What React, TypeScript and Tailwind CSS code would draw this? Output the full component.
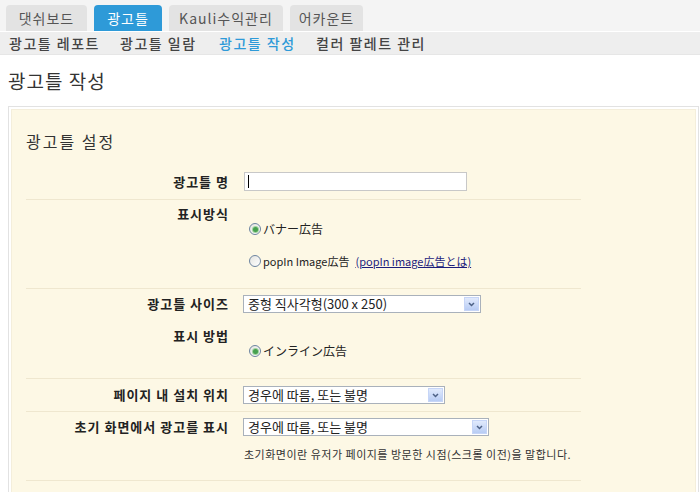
import React from 'react';

const tabs = [
  { label: '댓쉬보드', w: 'w-[81px]', active: false },
  { label: '광고틀', w: 'w-[68px]', active: true },
  { label: 'Kauli수익관리', w: 'w-[114px]', active: false },
  { label: '어카운트', w: 'w-[73px]', active: false },
];

const subNav = [
  { label: '광고틀 레포트', w: 'w-[111px]', active: false },
  { label: '광고틀 일람', w: 'w-[99px]', active: false },
  { label: '광고틀 작성', w: 'w-[97px]', active: true },
  { label: '컬러 팔레트 관리', w: 'w-[140px]', active: false },
];

const Radio: React.FC<{ checked?: boolean }> = ({ checked }) => (
  <span className="w-[12px] h-[12px] rounded-full border border-[#6d84a0] bg-linear-to-br from-[#e4e4e0] to-white flex items-center justify-center shrink-0">
    {checked && <span className="w-[5px] h-[5px] rounded-full bg-[#46a04e] ring-1 ring-[#9fd29f]" />}
  </span>
);

const Select: React.FC<{ w: string; text: string }> = ({ w, text }) => (
  <div className={`h-[18px] border border-[#a9b1bb] bg-white flex items-stretch ${w}`}>
    <span className="flex-1 pl-[4px] text-[13px] leading-[16px] text-[#222] whitespace-nowrap">{text}</span>
    <span className="w-[15px] my-[1px] mr-[1px] border border-[#c6d5f7] bg-linear-to-b from-[#e1eafc] to-[#b8ccf4] flex items-center justify-center">
      <svg width="7" height="5" viewBox="0 0 7 5">
        <path d="M1 1 L3.5 3.5 L6 1" fill="none" stroke="#4d6185" strokeWidth="1.5" />
      </svg>
    </span>
  </div>
);

const Label: React.FC<{ children: React.ReactNode; pt: string }> = ({ children, pt }) => (
  <div className={`w-[217px] pr-[14px] text-right text-[13px] font-bold tracking-[1px] text-[#222] whitespace-nowrap ${pt}`}>
    {children}
  </div>
);

export default function App() {
  return (
    <div className="w-[700px] h-[492px] overflow-hidden bg-white font-['Noto_Sans_CJK_KR',sans-serif]">
      {/* main tabs */}
      <div className="h-[31px] bg-[#f4f4f4] flex items-end pl-[6px] gap-[7px]">
        {tabs.map(t => (
          <div
            key={t.label}
            className={`${t.w} h-[26px] rounded-t-[4px] flex items-center justify-center text-[14px] tracking-[1px] ${
              t.active ? 'bg-[#2e9ad8] text-white' : 'bg-[#e3e3e3] text-[#555]'
            }`}
          >
            {t.label}
          </div>
        ))}
      </div>
      <div className="h-[1px] bg-white" />
      {/* sub nav */}
      <div className="h-[23px] bg-[#eeeeee] border-b border-[#e6e6e6] flex items-center pl-[9px]">
        {subNav.map(s => (
          <div
            key={s.label}
            className={`${s.w} text-[14px] font-medium tracking-[1.5px] whitespace-nowrap ${s.active ? 'text-[#2e9ad8]' : 'text-[#444]'}`}
          >
            {s.label}
          </div>
        ))}
      </div>

      <div className="h-[51px] flex items-center pl-[8px] pt-[2px] text-[19px] tracking-[1px] text-[#333]">광고틀 작성</div>

      {/* settings box */}
      <div className="ml-[8px] mr-[1px] border border-[#e2e2e2] bg-white p-[2px] h-[400px]">
        <div className="h-full bg-[#fdf8e5] border border-[#f4eedb] pl-[14px] pt-[21px]">
          <div className="h-[20px] leading-[20px] text-[16px] tracking-[2px] text-[#333]">광고틀 설정</div>

          <div className="w-[555px] mt-[16px]">
            {/* 광고틀 명 */}
            <div className="flex border-b border-[#efe7cf] pt-[5px] pb-[8px]">
              <Label pt="leading-[19px]">광고틀 명</Label>
              <div className="w-[223px] h-[19px] ml-[1px] border border-[#c8c8c8] bg-white flex items-center pl-[3px]">
                <span className="w-[1px] h-[13px] bg-black" />
              </div>
            </div>

            {/* 표시방식 */}
            <div className="flex border-b border-[#efe7cf]">
              <Label pt="pt-[6px] leading-[15px]">표시방식</Label>
              <div className="flex flex-col gap-[16px] pt-[21px] pb-[19px] pl-[6px] text-[#222]">
                <div className="h-[16px] flex items-center gap-[2px] text-[12px]">
                  <Radio checked />
                  <span>バナー広告</span>
                </div>
                <div className="h-[16px] flex items-center gap-[2px] whitespace-nowrap text-[11px]">
                  <Radio />
                  <span>popIn Image広告</span>
                  <span className="ml-[4px] text-[#1c1c7c] underline">(popIn image広告とは)</span>
                </div>
              </div>
            </div>

            {/* 광고틀 사이즈 */}
            <div className="flex pt-[6px] pb-[8px]">
              <Label pt="leading-[18px]">광고틀 사이즈</Label>
              <Select w="w-[238px]" text="중형 직사각형(300 x 250)" />
            </div>

            {/* 표시 방법 */}
            <div className="flex border-b border-[#efe7cf]">
              <Label pt="pt-[7px] leading-[15px]">표시 방법</Label>
              <div className="pt-[22px] pb-[19px] pl-[6px] text-[12px] text-[#222]">
                <div className="h-[16px] flex items-center gap-[2px]">
                  <Radio checked />
                  <span>インライン広告</span>
                </div>
              </div>
            </div>

            {/* 페이지 내 설치 위치 */}
            <div className="flex border-b border-[#efe7cf] pt-[7px] pb-[7px]">
              <Label pt="leading-[18px]">페이지 내 설치 위치</Label>
              <Select w="w-[202px]" text="경우에 따름, 또는 불명" />
            </div>

            {/* 초기 화면에서 광고를 표시 */}
            <div className="flex border-b border-[#efe7cf] pt-[6px] pb-[19px]">
              <Label pt="leading-[18px]">초기 화면에서 광고를 표시</Label>
              <div className="flex flex-col">
                <Select w="w-[246px]" text="경우에 따름, 또는 불명" />
                <div className="mt-[11px] h-[14px] leading-[14px] text-[11px] tracking-[0.5px] text-[#333] whitespace-nowrap pl-[1px]">
                  초기화면이란 유저가 페이지를 방문한 시점(스크롤 이전)을 말합니다.
                </div>
              </div>
            </div>
          </div>
        </div>
      </div>
    </div>
  );
}
